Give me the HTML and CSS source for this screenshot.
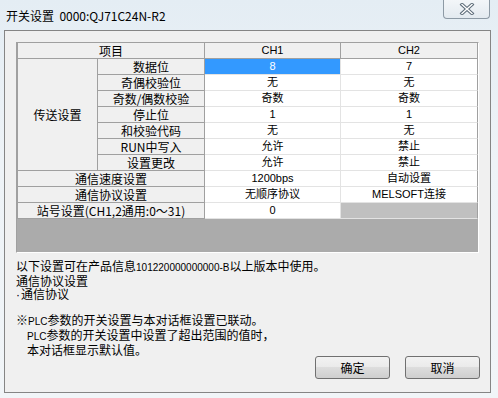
FILE: index.html
```html
<!DOCTYPE html>
<html lang="zh-CN">
    <head>
        <meta charset="UTF-8">
        <title>开关设置</title>
        <link rel="stylesheet" href="styles.css">
    </head>
    <body>
        <div class="window">
            <div class="titlebar">
                <span class="title">开关设置&nbsp;&nbsp;0000:QJ71C24N-R2</span>
                <button class="close" title="关闭">
                    <svg width="16" height="12" viewBox="0 0 16 12">
                        <path d="M3 1.5 L13 10.5 M13 1.5 L3 10.5" stroke="#5c6b78" stroke-width="3.4" stroke-linecap="square" fill="none"/>
                        <path d="M3 1.5 L13 10.5 M13 1.5 L3 10.5" stroke="#ffffff" stroke-width="1.4" stroke-linecap="square" fill="none"/>
                    </svg>
                </button>
            </div>

            <div class="client">
                <div class="grid-panel">
                    <div class="settings">
                        <div class="cell head span2">项目</div>
                        <div class="cell head">CH1</div>
                        <div class="cell head last">CH2</div>

                        <div class="cell label group">传送设置</div>
                        <div class="cell label">数据位</div>
                        <div class="cell value selected">8</div>
                        <div class="cell value last">7</div>

                        <div class="cell label">奇偶校验位</div>
                        <div class="cell value">无</div>
                        <div class="cell value last">无</div>

                        <div class="cell label">奇数/偶数校验</div>
                        <div class="cell value">奇数</div>
                        <div class="cell value last">奇数</div>

                        <div class="cell label">停止位</div>
                        <div class="cell value">1</div>
                        <div class="cell value last">1</div>

                        <div class="cell label">和校验代码</div>
                        <div class="cell value">无</div>
                        <div class="cell value last">无</div>

                        <div class="cell label">RUN中写入</div>
                        <div class="cell value">允许</div>
                        <div class="cell value last">禁止</div>

                        <div class="cell label">设置更改</div>
                        <div class="cell value">允许</div>
                        <div class="cell value last">禁止</div>

                        <div class="cell label span2">通信速度设置</div>
                        <div class="cell value">1200bps</div>
                        <div class="cell value last">自动设置</div>

                        <div class="cell label span2">通信协议设置</div>
                        <div class="cell value">无顺序协议</div>
                        <div class="cell value last">MELSOFT连接</div>

                        <div class="cell label span2">站号设置(CH1,2通用:0～31)</div>
                        <div class="cell value">0</div>
                        <div class="cell value last disabled"></div>
                    </div>
                </div>

                <div class="notes">
                    <p>以下设置可在产品信息<span class="num">101220000000000-B</span>以上版本中使用。</p>
                    <p>通信协议设置</p>
                    <p><span class="dot">·</span>通信协议</p>
                    <p class="gap">※<span class="num">PLC</span>参数的开关设置与本对话框设置已联动。</p>
                    <p class="indent"><span class="num">PLC</span>参数的开关设置中设置了超出范围的值时，</p>
                    <p class="indent">本对话框显示默认值。</p>
                </div>

                <div class="actions">
                    <button class="btn">确定</button>
                    <button class="btn">取消</button>
                </div>
            </div>
        </div>
    </body>
</html>
```

FILE: styles.css
```css
body {
margin: 0;
background: linear-gradient(180deg, #e4edf4 0%, #eef3f7 40%, #f1f5f8 100%);
font-family: "Noto Sans CJK SC", "Liberation Sans", sans-serif;
font-size: 12px;
color: #000;
}

.window {
width: 498px;
height: 398px;
display: flex;
flex-direction: column;
}

/* Title bar */
.titlebar {
height: 30px;
display: flex;
justify-content: space-between;
align-items: flex-start;
padding-left: 6px;
}

.title {
margin-top: 8px;
font-family: "Noto Sans CJK SC", sans-serif;
font-size: 12px;
line-height: 16px;
}

.close {
width: 47px;
height: 19px;
margin-right: 8px;
padding: 0;
border: 1px solid #8d9aa5;
border-top: none;
border-radius: 0 0 4px 4px;
background: linear-gradient(180deg, #f3f6f9 0%, #e3eaf0 100%);
display: flex;
align-items: center;
justify-content: center;
}

/* Client area */
.client {
height: 363px;
margin: 0 7px 0 4px;
box-sizing: border-box;
border: 1px solid #858585;
background-color: #f0f0f0;
display: flex;
flex-direction: column;
}

.grid-panel {
height: 211px;
margin: 11px 11px 0 11px;
box-sizing: border-box;
border: 1px solid;
border-color: #a0a0a0 #ffffff #ffffff #a0a0a0;
background-color: #ababab;
}

.settings {
display: grid;
grid-template-columns: 80px 107px 136px 137px;
grid-auto-rows: 16px;
border-left: 1px solid #a0a0a0;
}

.cell {
box-sizing: border-box;
border-right: 1px solid #a0a0a0;
border-bottom: 1px solid #a0a0a0;
display: flex;
align-items: center;
justify-content: center;
line-height: 15px;
white-space: nowrap;
}

.head {
background-color: #f0f0f0;
font-family: "Liberation Sans", "Noto Sans CJK SC", sans-serif;
font-size: 11px;
}

.head.span2 {
font-family: "Noto Sans CJK SC", sans-serif;
font-size: 12px;
}

.label {
background-color: #f0f0f0;
}

.span2 {
grid-column: span 2;
}

.group {
grid-row: span 7;
}

.value {
background-color: #ffffff;
border-right-color: #e3e3e3;
border-bottom-color: #e3e3e3;
font-family: "Liberation Sans", "Noto Sans CJK SC", sans-serif;
font-size: 11px;
}

.value.last {
border-right-color: #a0a0a0;
}

.value.selected {
background-color: #3399ff;
color: #ffffff;
}

.value.disabled {
background-color: #c0c0c0;
}

/* Notes */
.notes {
margin: 6px 0 0 11px;
}

.notes p {
margin: 0;
line-height: 13px;
white-space: nowrap;
}

.num {
font-family: "Liberation Sans", sans-serif;
font-size: 10px;
}

.dot {
font-family: "Liberation Sans", sans-serif;
margin-right: 1px;
}

.notes .gap {
margin-top: 11px;
}

.notes .indent {
padding-left: 11px;
}

/* Buttons */
.actions {
margin-top: auto;
margin-bottom: 13px;
margin-right: 10px;
display: flex;
justify-content: flex-end;
gap: 15px;
}

.btn {
width: 75px;
height: 23px;
padding: 0;
border: 1px solid #707070;
border-radius: 3px;
background: linear-gradient(180deg, #f2f2f2 0%, #ebebeb 45%, #dddddd 50%, #cfcfcf 100%);
font-family: "Noto Sans CJK SC", sans-serif;
font-size: 12px;
color: #000;
}
```
